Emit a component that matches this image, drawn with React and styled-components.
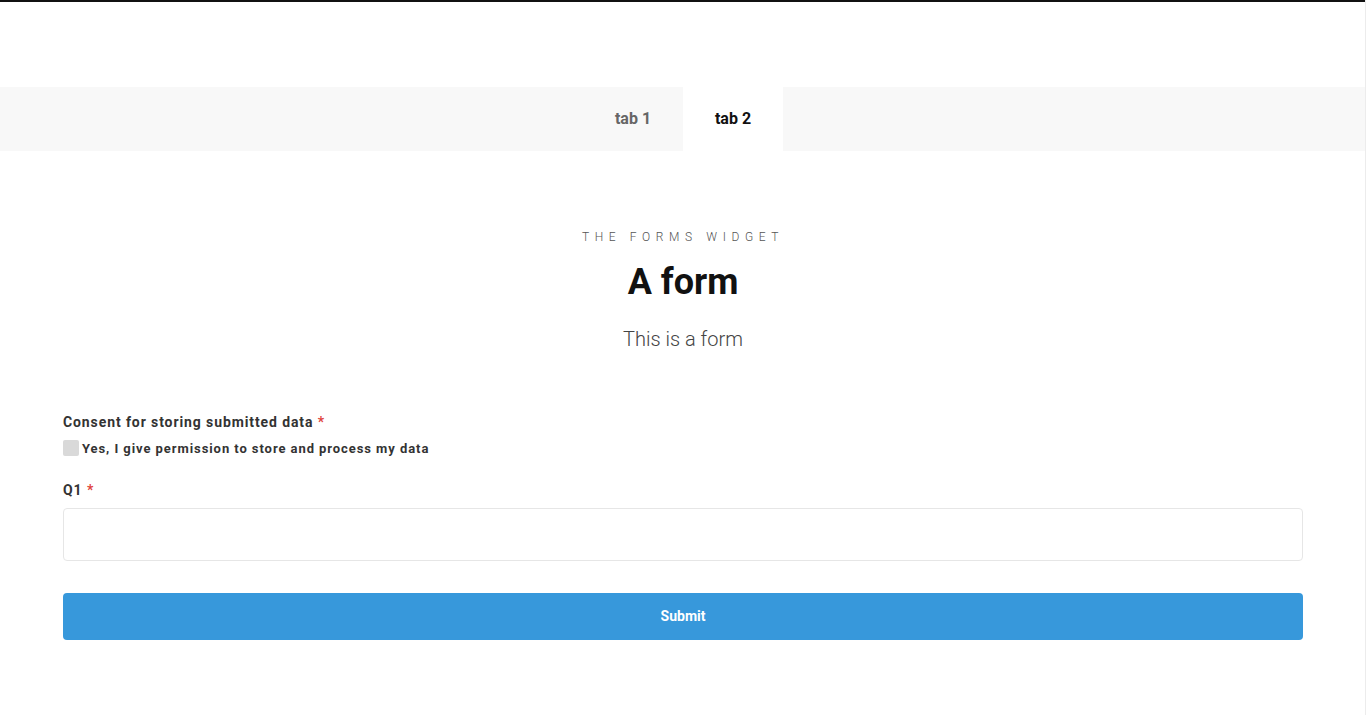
import React from 'react'
import styled, { createGlobalStyle } from 'styled-components'

const Global = createGlobalStyle`
  html, body {
    margin: 0;
    padding: 0;
    background: #fff;
    font-family: Roboto, "Liberation Sans", sans-serif;
  }
`

const Page = styled.div`
  position: relative;
  width: 1366px;
  min-height: 715px;
  border-top: 2px solid #111;
  box-sizing: border-box;

  &::after {
    content: '';
    position: absolute;
    top: -2px;
    right: 0;
    bottom: 0;
    width: 1px;
    background: #ececec;
  }
`

const TabBar = styled.div`
  margin-top: 85px;
  height: 64px;
  background: #f8f8f8;
  display: flex;
  justify-content: center;
`

const Tab = styled.div`
  width: 100px;
  display: flex;
  align-items: center;
  justify-content: center;
  padding-bottom: 2px;
  font-size: 16px;
  font-weight: 700;
  color: ${p => (p.$active ? '#111' : '#666')};
  background: ${p => (p.$active ? '#fff' : 'transparent')};
`

const Header = styled.div`
  padding-top: 78px;
  display: flex;
  flex-direction: column;
  align-items: center;
`

const Eyebrow = styled.div`
  font-size: 12px;
  letter-spacing: 5.6px;
  color: #555;
  font-weight: 300;
  line-height: 16px;
`

const Title = styled.h1`
  margin: 17px 0 0;
  font-size: 36px;
  line-height: 40px;
  font-weight: 700;
  color: #111;
`

const Sub = styled.p`
  margin: 23px 0 0;
  font-size: 20px;
  line-height: 28px;
  font-weight: 300;
  color: #444;
`

const Form = styled.form`
  margin: 59px 63px 0 63px;
  display: flex;
  flex-direction: column;
`

const Label = styled.div`
  font-size: 14px;
  font-weight: 700;
  letter-spacing: 0.9px;
  color: #333;
  line-height: 20px;
`

const Req = styled.span`
  color: #e0443e;
`

const CheckRow = styled.label`
  display: flex;
  align-items: center;
  gap: 3px;
  margin-top: 8px;
  font-size: 13px;
  font-weight: 700;
  letter-spacing: 0.93px;
  color: #333;
`

const Box = styled.span`
  width: 16px;
  height: 16px;
  border-radius: 2px;
  background: #d9d9d9;
`

const Field = styled.div`
  margin-top: 24px;
  display: flex;
  flex-direction: column;
  gap: 8px;
`

const Input = styled.div`
  height: 51px;
  border: 1px solid #e6e6e6;
  border-radius: 4px;
`

const Button = styled.div`
  margin-top: 32px;
  height: 47px;
  padding-bottom: 2px;
  box-sizing: border-box;
  border-radius: 4px;
  background: #3798db;
  color: #fff;
  font-size: 14px;
  font-weight: 700;
  display: flex;
  align-items: center;
  justify-content: center;
`

export default function App() {
  return (
    <Page>
      <Global />
      <TabBar>
        <Tab>tab 1</Tab>
        <Tab $active>tab 2</Tab>
      </TabBar>
      <Header>
        <Eyebrow>THE FORMS WIDGET</Eyebrow>
        <Title>A form</Title>
        <Sub>This is a form</Sub>
      </Header>
      <Form>
        <Label>
          Consent for storing submitted data <Req>*</Req>
        </Label>
        <CheckRow>
          <Box />
          Yes, I give permission to store and process my data
        </CheckRow>
        <Field>
          <Label>
            Q1 <Req>*</Req>
          </Label>
          <Input />
        </Field>
        <Button>Submit</Button>
      </Form>
    </Page>
  )
}
